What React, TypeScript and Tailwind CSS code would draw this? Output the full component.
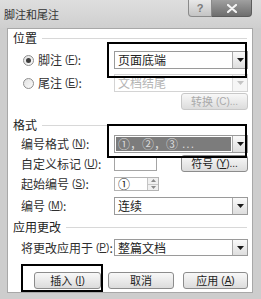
import React from "react";

const font = { fontFamily: '"Noto Sans CJK SC", "Liberation Sans", sans-serif' };

function Key({ k }: { k: string }) {
  return (
    <span className="ml-[3px] font-['Liberation_Sans'] text-[10px]">
      (<u>{k}</u>)
    </span>
  );
}

function Arrow({ disabled }: { disabled?: boolean }) {
  return (
    <div
      className={`flex h-full w-[15px] shrink-0 items-center justify-center border-l ${
        disabled ? "border-[#dcdcdc] bg-[#f6f6f6]" : "border-[#a9a9a9] bg-gradient-to-b from-[#fafafa] to-[#dedede]"
      }`}
    >
      <svg width="7" height="4" viewBox="0 0 7 4">
        <path d="M0 0h7L3.5 4z" fill={disabled ? "#c4c4c4" : "#1a1a1a"} />
      </svg>
    </div>
  );
}

function Combo({
  text,
  disabled,
  selected,
  h = "h-[18px]",
}: {
  text: React.ReactNode;
  disabled?: boolean;
  selected?: boolean;
  h?: string;
}) {
  return (
    <div
      className={`flex ${h} w-[134px] items-stretch border bg-white ${
        disabled ? "border-[#d4d4d4]" : "border-[#9a9a9a]"
      }`}
    >
      <div className="flex min-w-0 flex-1 items-center p-[1px]">
        <div
          className={`flex h-full w-full items-center pl-[2px] text-[12px] leading-none ${
            selected ? "bg-[#7c7c7c] text-[#dadada]" : disabled ? "text-[#b4b4b4]" : "text-[#222]"
          }`}
        >
          {text}
        </div>
      </div>
      <Arrow disabled={disabled} />
    </div>
  );
}

function Button({
  children,
  w,
  disabled,
}: {
  children: React.ReactNode;
  w: string;
  disabled?: boolean;
}) {
  return (
    <div
      className={`flex h-[17px] ${w} items-center justify-center rounded-[3px] border bg-gradient-to-b from-[#f8f8f8] to-[#dcdcdc] text-[11px] leading-none ${
        disabled ? "border-[#c8c8c8] text-[#aaaaaa]" : "border-[#8c8c8c] text-[#222]"
      }`}
    >
      {children}
    </div>
  );
}

function Radio({ checked }: { checked?: boolean }) {
  return (
    <div className="mr-[4px] flex h-[11px] w-[11px] items-center justify-center rounded-full border border-[#8e8e8e] bg-gradient-to-br from-[#e2e2e2] to-[#fafafa]">
      {checked && <div className="h-[5px] w-[5px] rounded-full bg-[#3e3e3e]" />}
    </div>
  );
}

function Header({ text, mt }: { text: string; mt: string }) {
  return (
    <div className={`${mt} flex h-[14px] items-center pl-[5px] pr-[5px]`}>
      <span className="text-[12px] leading-none text-[#222]">{text}</span>
      <div className="ml-[5px] h-px flex-1 bg-[#d8d8d8]" />
    </div>
  );
}

function Row({
  label,
  k,
  mt,
  h = "h-[18px]",
  radio,
  children,
}: {
  label: string;
  k: string;
  mt: string;
  h?: string;
  radio?: "on" | "off";
  children: React.ReactNode;
}) {
  return (
    <div className={`${mt} flex ${h} items-center`}>
      <div className={`flex w-[106px] shrink-0 items-center text-[12px] leading-none text-[#2e2e2e] ${radio ? "pl-[15px]" : "pl-[13px]"}`}>
        {radio && <Radio checked={radio === "on"} />}
        <span>{label}</span>
        <Key k={k} />
        <span>:</span>
      </div>
      {children}
    </div>
  );
}

export default function App() {
  return (
    <div style={font} className="relative flex h-[299px] w-[261px] flex-col overflow-hidden bg-[#cdcdcd] select-none">
      {/* title bar */}
      <div className="flex h-[28px] shrink-0 items-start bg-gradient-to-b from-[#dedede] to-[#cfcfcf]">
        <span className="pl-[4px] pt-[9px] text-[11px] leading-none text-[#333]">脚注和尾注</span>
        <div className="ml-auto mr-[9px] flex">
          <div className="flex h-[17px] w-[24px] items-center justify-center rounded-bl-[4px] border border-t-0 border-[#8a8a8a] bg-gradient-to-b from-[#e8e8e8] to-[#c4c4c4] font-['Liberation_Sans'] text-[11px] font-bold text-[#7a7a7a]">
            ?
          </div>
          <div className="flex h-[17px] w-[40px] items-center justify-center rounded-br-[4px] border border-l-0 border-t-0 border-[#5c5c5c] bg-gradient-to-b from-[#a0a0a0] to-[#6e6e6e]">
            <svg width="10" height="9" viewBox="0 0 10 9">
              <path d="M1 1l8 7M9 1L1 8" stroke="#f4f4f4" strokeWidth="2.2" strokeLinecap="round" />
            </svg>
          </div>
        </div>
      </div>

      {/* client area */}
      <div className="mb-[6px] ml-[7px] mr-[8px] flex-1 border border-[#a8a8a8] bg-white">
        <div className="relative flex h-full flex-col">
          <Header text="位置" mt="mt-[2px]" />
          <Row label="脚注" k="F" mt="mt-[6px]" radio="on">
            <Combo text="页面底端" />
          </Row>
          <Row label="尾注" k="E" mt="mt-[5px]" radio="off">
            <Combo text="文档结尾" disabled />
          </Row>
          <div className="mt-[1px] flex pl-[173px]">
            <Button w="w-[67px]" disabled>
              转换<span className="ml-[3px] font-['Liberation_Sans'] text-[10px]">(C)...</span>
            </Button>
          </div>

          <Header text="格式" mt="mt-[8px]" />
          <Row label="编号格式" k="N" mt="mt-[3px]">
            <Combo
              selected
              text={
                <>
                  ①，②，③<span className="ml-[4px] font-['Liberation_Sans'] tracking-[1px]">...</span>
                </>
              }
            />
          </Row>
          <Row label="自定义标记" k="U" mt="mt-[2px]" h="h-[17px]">
            <div className="h-[15px] w-[43px] border border-[#a4a4a4] bg-white" />
            <div className="ml-[24px]">
              <Button w="w-[67px]">
                符号<span className="ml-[3px] font-['Liberation_Sans'] text-[10px]">(<u>Y</u>)...</span>
              </Button>
            </div>
          </Row>
          <Row label="起始编号" k="S" mt="mt-[5px]" h="h-[14px]">
            <div className="flex h-[14px] w-[45px] items-stretch border border-[#b4b4b4] bg-white">
              <div className="flex flex-1 items-center pl-[3px] text-[12px] leading-none text-[#222]">①</div>
              <div className="flex w-[11px] flex-col border-l border-[#c4c4c4] bg-[#f0f0f0]">
                <div className="flex flex-1 items-center justify-center border-b border-[#c8c8c8]">
                  <svg width="5" height="3" viewBox="0 0 5 3"><path d="M0 3h5L2.5 0z" fill="#8a8a8a" /></svg>
                </div>
                <div className="flex flex-1 items-center justify-center">
                  <svg width="5" height="3" viewBox="0 0 5 3"><path d="M0 0h5L2.5 3z" fill="#8a8a8a" /></svg>
                </div>
              </div>
            </div>
          </Row>
          <Row label="编号" k="M" mt="mt-[6px]">
            <Combo text="连续" />
          </Row>

          <Header text="应用更改" mt="mt-[5px]" />
          <Row label="将更改应用于" k="P" mt="mt-[5px]" h="h-[17px]">
            <Combo text="整篇文档" h="h-[17px]" />
          </Row>

          <div className="mt-[16px] flex pl-[26px]">
            <Button w="w-[67px]">
              插入<span className="ml-[3px] font-['Liberation_Sans'] text-[10px]">(<u>I</u>)</span>
            </Button>
            <div className="ml-[7px]">
              <Button w="w-[66px]">取消</Button>
            </div>
            <div className="ml-[9px]">
              <Button w="w-[65px]">
                应用<span className="ml-[3px] font-['Liberation_Sans'] text-[10px]">(<u>A</u>)</span>
              </Button>
            </div>
          </div>

          {/* highlight annotations */}
          <div className="pointer-events-none absolute left-[99px] top-[13px] h-[36px] w-[140px] border-2 border-black" />
          <div className="pointer-events-none absolute left-[99px] top-[95px] h-[34px] w-[140px] border-2 border-black" />
          <div className="pointer-events-none absolute left-[13px] top-[235px] h-[28px] w-[82px] border-2 border-black" />
        </div>
      </div>
    </div>
  );
}
